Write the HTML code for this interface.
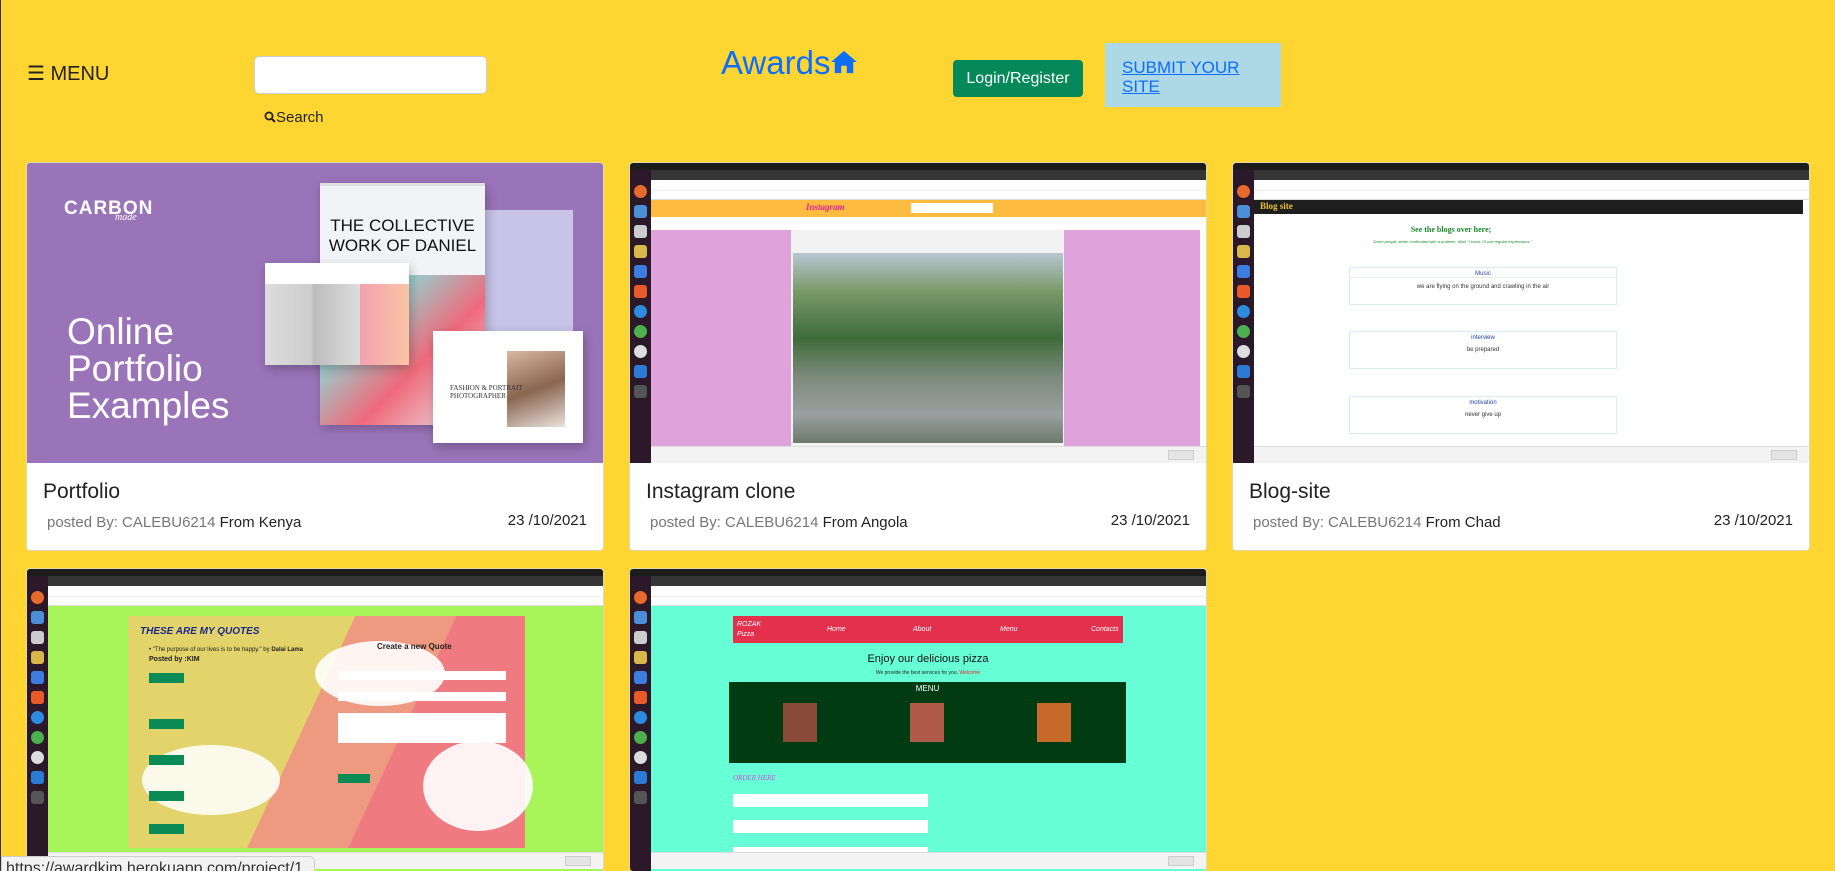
<!DOCTYPE html>
<html><head><meta charset="utf-8"><style>
*{box-sizing:border-box;margin:0;padding:0}
html{width:1835px;height:871px;overflow:hidden}
body{width:1835px;height:871px;overflow:hidden;background:#ffd531;font-family:"Liberation Sans",sans-serif;position:relative;border-left:1px solid #333}
.a{position:absolute}
.card{position:absolute;width:578px;background:#fff;border:1px solid #e2d9b0;border-radius:4px;overflow:hidden}
.img{position:relative;width:576px;height:300px;overflow:hidden}
.ttl{position:absolute;left:16px;top:317px;font-size:21px;color:#222}
.pb{position:absolute;left:20px;top:351px;font-size:15px;color:#777}
.pb b{font-weight:normal;color:#222}
.dt{position:absolute;right:16px;top:349px;font-size:15px;color:#222}
.tb{position:absolute;left:0;top:0;width:100%;height:7px;background:#1c1c1c}
.tabs{position:absolute;left:21px;top:7px;right:0;height:10px;background:#353535}
.addr{position:absolute;left:21px;top:17px;right:0;height:11px;background:#fff;border-bottom:1px solid #eee}
.bm{position:absolute;left:21px;top:28px;right:0;height:9px;background:#fff;border-bottom:1px solid #ddd}
.dock{position:absolute;left:0;top:7px;width:21px;bottom:0;background:#2b1929}
.dock i{position:absolute;left:4px;width:13px;height:13px;border-radius:3px}
.dl{position:absolute;left:21px;bottom:0;right:0;height:17px;background:#f3f3f3;border-top:1px solid #ddd}
.sh{position:absolute;right:12px;bottom:3px;width:26px;height:10px;background:#e4e4e4;border:1px solid #ccc}
</style></head><body>

<div class="a" style="left:26px;top:61px;font-size:20px;color:#222">☰ MENU</div>
<div class="a" style="left:253px;top:56px;width:233px;height:38px;background:#fff;border:1px solid #ccd;border-radius:5px"></div>
<div class="a" style="left:263px;top:109px;font-size:15px;color:#222"><svg width="12" height="12" viewBox="0 0 12 12" style="vertical-align:-1px"><circle cx="5" cy="5" r="3.6" fill="none" stroke="#222" stroke-width="1.8"/><path d="M7.5 7.5L11 11" stroke="#222" stroke-width="2"/></svg>Search</div>
<div class="a" style="left:720px;top:44px;font-size:33px;color:#0d6efd">Awards<svg width="28" height="24" viewBox="0 0 30 26" style="vertical-align:0"><path d="M15 1L1 13h4v12h7v-8h6v8h7V13h4z" fill="#0d6efd"/></svg></div>
<div class="a" style="left:952px;top:60px;width:130px;height:37px;background:#05895a;border-radius:4px;color:#fff;font-size:16px;text-align:center;line-height:37px">Login/Register</div>
<div class="a" style="left:1104px;top:43px;width:176px;height:64px;background:#add8e6;padding:15px 17px;font-size:17px;line-height:19px"><span style="color:#0d6efd;text-decoration:underline">SUBMIT YOUR SITE</span></div>

<!-- card 1 -->
<div class="card" style="left:25px;top:162px;height:389px">
 <div class="img" style="background:#9a74b9">
  <div class="a" style="left:37px;top:35px;color:#fff;font-size:19px;font-weight:bold;letter-spacing:1px">CARBON</div>
  <div class="a" style="left:88px;top:49px;color:#fff;font-size:10px;font-style:italic;font-family:'Liberation Serif',serif">made</div>
  <div class="a" style="left:40px;top:150px;color:#fff;font-size:37px;line-height:37px;font-weight:300">Online<br>Portfolio<br>Examples</div>
  <div class="a" style="left:458px;top:47px;width:88px;height:123px;background:#c8c4e8"></div>
  <div class="a" style="left:293px;top:20px;width:165px;height:241px;background:#f2f3f7;box-shadow:2px 4px 10px rgba(0,0,0,.25)">
   <div style="height:3px;background:#ddd"></div>
   <div class="a" style="left:0;top:92px;width:165px;height:150px;background:linear-gradient(135deg,#e8eef4,#9cc,#ef6a7a 60%,#e8eef4)"></div>
   <div class="a" style="left:0;top:33px;width:165px;text-align:center;font-size:17px;line-height:20px;color:#111">THE COLLECTIVE<br>WORK OF DANIEL</div>
  </div>
  <div class="a" style="left:238px;top:100px;width:144px;height:102px;background:#fff;box-shadow:2px 4px 10px rgba(0,0,0,.25)">
   <div class="a" style="left:0;top:21px;width:144px;height:81px;background:linear-gradient(90deg,#ddd 0,#ccc 33%,#bbb 33%,#ddd 66%,#f4a0b0 66%,#f9c5a4)"></div>
  </div>
  <div class="a" style="left:406px;top:168px;width:150px;height:112px;background:#fff;box-shadow:2px 4px 10px rgba(0,0,0,.25)">
   <div class="a" style="left:74px;top:20px;width:58px;height:76px;background:linear-gradient(160deg,#d9b9a0,#8a6550 50%,#e8e2dc)"></div>
   <div class="a" style="left:17px;top:53px;font-size:7px;font-family:'Liberation Serif',serif;color:#333">FASHION &amp; PORTRAIT<br>PHOTOGRAPHER</div>
  </div>
 </div>
 <div class="ttl">Portfolio</div>
 <div class="pb">posted By: CALEBU6214 <b>From Kenya</b></div>
 <div class="dt">23 /10/2021</div>
</div>

<!-- card 2 -->
<div class="card" style="left:628px;top:162px;height:389px">
 <div class="img" style="background:#fff">
  <div class="tb"></div><div class="tabs"></div><div class="addr"></div><div class="bm"></div>
  <div class="a" style="left:21px;top:37px;right:0;height:17px;background:#ffbb40"></div>
  <div class="a" style="left:176px;top:39px;font-size:9px;font-style:italic;font-weight:bold;color:#e0249a;font-family:'Liberation Serif',serif">Instagram</div>
  <div class="a" style="left:281px;top:40px;width:82px;height:10px;background:#fff"></div>
  <div class="a" style="left:21px;top:67px;right:6px;height:216px;background:#dfa2db"></div>
  <div class="a" style="left:161px;top:67px;width:273px;height:216px;background:#f2f2f2"></div>
  <div class="a" style="left:163px;top:90px;width:270px;height:190px;background:linear-gradient(180deg,#b9c6d2 0,#7a9a6a 20%,#3f6b3a 45%,#7c8a7c 65%,#9aa0a0 85%,#6d7a6d)"></div>
  <div class="dock"><i style="top:15px;background:#e66a2c;border-radius:50%"></i><i style="top:35px;background:#4a8fd8"></i><i style="top:55px;background:#ccc"></i><i style="top:75px;background:#d8b84a"></i><i style="top:95px;background:#3c7de0"></i><i style="top:115px;background:#e85a2a"></i><i style="top:135px;background:#2d8ce0;border-radius:50%"></i><i style="top:155px;background:#4caf50;border-radius:50%"></i><i style="top:175px;background:#ddd;border-radius:50%"></i><i style="top:195px;background:#2b7bd6"></i><i style="top:215px;background:#555"></i></div>
  <div class="dl"><div class="sh"></div></div>
 </div>
 <div class="ttl">Instagram clone</div>
 <div class="pb">posted By: CALEBU6214 <b>From Angola</b></div>
 <div class="dt">23 /10/2021</div>
</div>

<!-- card 3 -->
<div class="card" style="left:1231px;top:162px;height:389px">
 <div class="img" style="background:#fff">
  <div class="tb"></div><div class="tabs"></div><div class="addr"></div><div class="bm"></div>
  <div class="a" style="left:21px;top:37px;right:6px;height:14px;background:#1e1e1e"></div>
  <div class="a" style="left:27px;top:38px;font-size:9px;font-weight:bold;color:#e8c030;font-family:'Liberation Serif',serif">Blog site</div>
  <div class="a" style="left:140px;top:62px;width:156px;text-align:center;font-size:8px;font-weight:bold;color:#1a8a2a;font-family:'Liberation Serif',serif">See the blogs over here;</div>
  <div class="a" style="left:140px;top:76px;width:220px;height:10px;font-size:4px;color:#1a8a2a;font-style:italic">Some people, when confronted with a problem, think "I know, I'll use regular expressions."</div>
  <div class="a" style="left:116px;top:104px;width:268px;height:38px;border:1px solid #d6eef0"><div style="text-align:center;font-size:6px;color:#2244aa;border-bottom:1px solid #e8eef0;margin-top:3px">Music</div><div style="text-align:center;font-size:6px;color:#333;margin-top:6px">we are flying on the ground and crawling in the air</div></div>
  <div class="a" style="left:116px;top:168px;width:268px;height:38px;border:1px solid #d6eef0"><div style="text-align:center;font-size:6px;color:#2244aa;margin-top:3px">interview</div><div style="text-align:center;font-size:6px;color:#333;margin-top:6px">be prepared</div></div>
  <div class="a" style="left:116px;top:233px;width:268px;height:38px;border:1px solid #d6eef0"><div style="text-align:center;font-size:6px;color:#2244aa;margin-top:3px">motivation</div><div style="text-align:center;font-size:6px;color:#333;margin-top:6px">never give up</div></div>
  <div class="dock"><i style="top:15px;background:#e66a2c;border-radius:50%"></i><i style="top:35px;background:#4a8fd8"></i><i style="top:55px;background:#ccc"></i><i style="top:75px;background:#d8b84a"></i><i style="top:95px;background:#3c7de0"></i><i style="top:115px;background:#e85a2a"></i><i style="top:135px;background:#2d8ce0;border-radius:50%"></i><i style="top:155px;background:#4caf50;border-radius:50%"></i><i style="top:175px;background:#ddd;border-radius:50%"></i><i style="top:195px;background:#2b7bd6"></i><i style="top:215px;background:#555"></i></div>
  <div class="dl"><div class="sh"></div></div>
 </div>
 <div class="ttl">Blog-site</div>
 <div class="pb">posted By: CALEBU6214 <b>From Chad</b></div>
 <div class="dt">23 /10/2021</div>
</div>

<!-- card 4 -->
<div class="card" style="left:25px;top:568px;height:304px">
 <div class="img" style="background:#a8f55a;height:302px">
  <div class="tb"></div><div class="tabs"></div><div class="addr"></div><div class="bm"></div>
  <div class="a" style="left:101px;top:47px;width:397px;height:232px;background:linear-gradient(115deg,#e2d36a 0,#e2d36a 45%,#ee9a80 45%,#ee9a80 65%,#ef7a80 65%)"></div>
  <div class="a" style="left:288px;top:72px;width:130px;height:65px;background:#fff;border-radius:50%;opacity:.9"></div>
  <div class="a" style="left:115px;top:176px;width:138px;height:70px;background:#fff;border-radius:50%;opacity:.85"></div>
  <div class="a" style="left:396px;top:172px;width:110px;height:90px;background:#fff;border-radius:50%;opacity:.9"></div>
  <div class="a" style="left:113px;top:57px;font-size:10px;font-weight:bold;font-style:italic;color:#1a2a8a">THESE ARE MY QUOTES</div>
  <div class="a" style="left:122px;top:76px;font-size:6px;line-height:10px;color:#222;width:170px">• "The purpose of our lives is to be happy." by <b>Dalai Lama</b><br><b style="font-size:7px">Posted by :KIM</b></div>
  <div class="a" style="left:122px;top:104px;width:35px;height:10px;background:#0a8a55"></div>
  <div class="a" style="left:122px;top:150px;width:35px;height:10px;background:#0a8a55"></div>
  <div class="a" style="left:122px;top:186px;width:35px;height:10px;background:#0a8a55"></div>
  <div class="a" style="left:122px;top:222px;width:35px;height:10px;background:#0a8a55"></div>
  <div class="a" style="left:122px;top:255px;width:35px;height:10px;background:#0a8a55"></div>
  <div class="a" style="left:350px;top:73px;font-size:8px;font-weight:bold;color:#222">Create a new Quote</div>
  <div class="a" style="left:311px;top:102px;width:168px;height:9px;background:#fff"></div>
  <div class="a" style="left:311px;top:123px;width:168px;height:9px;background:#fff"></div>
  <div class="a" style="left:311px;top:144px;width:168px;height:30px;background:#fff"></div>
  <div class="a" style="left:311px;top:205px;width:32px;height:9px;background:#0a8a55"></div>
  <div class="dock"><i style="top:15px;background:#e66a2c;border-radius:50%"></i><i style="top:35px;background:#4a8fd8"></i><i style="top:55px;background:#ccc"></i><i style="top:75px;background:#d8b84a"></i><i style="top:95px;background:#3c7de0"></i><i style="top:115px;background:#e85a2a"></i><i style="top:135px;background:#2d8ce0;border-radius:50%"></i><i style="top:155px;background:#4caf50;border-radius:50%"></i><i style="top:175px;background:#ddd;border-radius:50%"></i><i style="top:195px;background:#2b7bd6"></i><i style="top:215px;background:#555"></i></div>
  <div class="dl" style="top:283px"><div class="sh"></div></div>
 </div>
</div>

<!-- card 5 -->
<div class="card" style="left:628px;top:568px;height:304px">
 <div class="img" style="background:#66ffd6;height:302px">
  <div class="tb"></div><div class="tabs"></div><div class="addr"></div><div class="bm"></div>
  <div class="a" style="left:103px;top:47px;width:390px;height:27px;background:#e3304d;color:#fff;font-size:7px;font-style:italic"><span class="a" style="left:4px;top:4px;line-height:10px">ROZAK<br>Pizza</span><span class="a" style="left:94px;top:10px">Home</span><span class="a" style="left:180px;top:10px">About</span><span class="a" style="left:267px;top:10px">Menu</span><span class="a" style="left:358px;top:10px">Contacts</span></div>
  <div class="a" style="left:103px;top:84px;width:390px;text-align:center;font-size:11px;color:#111">Enjoy our delicious pizza</div>
  <div class="a" style="left:103px;top:101px;width:390px;text-align:center;font-size:5px;color:#222">We provide the best services for you. <span style="color:#e22">Welcome</span></div>
  <div class="a" style="left:99px;top:113px;width:397px;height:81px;background:#003b12;color:#fff;font-size:8px;text-align:center;padding-top:2px">MENU
   <div class="a" style="left:54px;top:21px;width:34px;height:39px;background:#8a4a3a"></div>
   <div class="a" style="left:181px;top:21px;width:34px;height:39px;background:#b05a4a"></div>
   <div class="a" style="left:308px;top:21px;width:34px;height:39px;background:#c86a2a"></div>
  </div>
  <div class="a" style="left:103px;top:205px;font-size:7px;font-style:italic;color:#d050e0;font-family:'Liberation Serif',serif">ORDER HERE</div>
  <div class="a" style="left:103px;top:225px;width:195px;height:13px;background:#fff"></div>
  <div class="a" style="left:103px;top:251px;width:195px;height:13px;background:#fff"></div>
  <div class="a" style="left:103px;top:278px;width:195px;height:6px;background:#fff"></div>
  <div class="dock"><i style="top:15px;background:#e66a2c;border-radius:50%"></i><i style="top:35px;background:#4a8fd8"></i><i style="top:55px;background:#ccc"></i><i style="top:75px;background:#d8b84a"></i><i style="top:95px;background:#3c7de0"></i><i style="top:115px;background:#e85a2a"></i><i style="top:135px;background:#2d8ce0;border-radius:50%"></i><i style="top:155px;background:#4caf50;border-radius:50%"></i><i style="top:175px;background:#ddd;border-radius:50%"></i><i style="top:195px;background:#2b7bd6"></i><i style="top:215px;background:#555"></i></div>
  <div class="dl" style="top:283px"><div class="sh"></div></div>
 </div>
</div>

<div class="a" style="left:0;top:856px;width:314px;height:20px;background:#f2f2f2;border:1px solid #ccc;border-radius:0 5px 0 0;font-size:16px;color:#333;padding:3px 0 0 4px;white-space:nowrap;overflow:hidden">https://awardkim.herokuapp.com/project/1</div>
</body></html>
